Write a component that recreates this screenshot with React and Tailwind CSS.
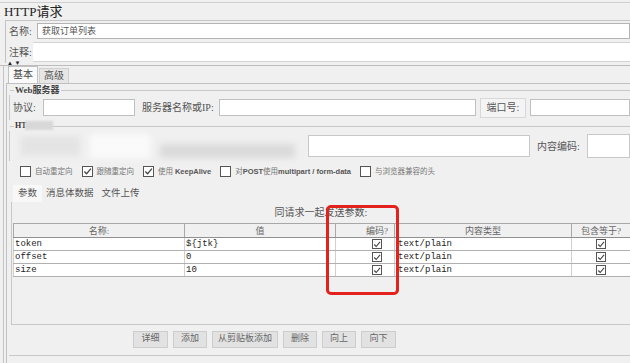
const serif = "font-['Liberation_Serif','Noto_Sans_CJK_SC',serif]";
const mono = "font-['Liberation_Mono','Noto_Sans_CJK_SC',monospace]";
const sans = "font-['Liberation_Sans','Noto_Sans_CJK_SC',sans-serif]";

const Check = ({ checked, size = "w-[11px] h-[11px]" }) => (
  <span className={`${size} inline-flex items-center justify-center border border-[#555] bg-white shrink-0`}>
    {checked && (
      <svg viewBox="0 0 10 10" className="w-[9px] h-[9px]">
        <path d="M1.5 5 L4 7.5 L8.8 1.8" fill="none" stroke="#444" strokeWidth="1.4" />
      </svg>
    )}
  </span>
);

const Option = ({ checked, children }) => (
  <div className="flex items-center gap-[4px]">
    <Check checked={checked} />
    <span className="text-[7.5px] text-[#777] leading-none whitespace-nowrap">{children}</span>
  </div>
);

const rows = [
  ["token", "${jtk}"],
  ["offset", "0"],
  ["size", "10"],
];

export default function App() {
  return (
    <div className={`relative w-[630px] h-[363px] overflow-hidden bg-[#f0f0f0] text-[#333] ${serif}`}>
      {/* 标题 */}
      <div className="mt-[2px] border-t border-[#cfcfcf] h-[18px] pl-[4px] text-[13px] leading-[18px] text-[#222]">
        HTTP请求
      </div>

      {/* 名称 / 注释 */}
      <div className="ml-[5px] border-l border-t border-[#c4c4c4]">
        <div className="h-[20px] flex items-center">
          <span className="w-[30px] pl-[3px] text-[10px] text-[#555]">名称:</span>
          <div className="flex-1 h-[16px] ml-[1px] bg-white border border-[#b4b4b4] text-[9px] leading-[14px] pl-[4px] text-[#555]">
            获取订单列表
          </div>
        </div>
        <div className="h-[22px] flex items-center">
          <span className="w-[27px] pl-[3px] text-[10px] text-[#555]">注释:</span>
          <div className="flex-1 h-[20px] bg-white border-y border-[#d4d4d4]" />
        </div>
      </div>
      <div className="h-[3px] border-b border-[#bdbdbd] relative">
        <span className="absolute left-[7px] top-[-3px] text-[6px] leading-none text-[#222]">▲ ▼</span>
      </div>

      {/* 基本 / 高级 */}
      <div className="ml-[3px] border-l border-[#c4c4c4]">
        <div className="h-[17px] flex items-end pl-[4px] gap-[1px]">
          <div className="h-[17px] px-[4px] bg-[#fafafa] border border-b-0 border-[#c0c0c0] text-[10px] leading-[16px] text-[#444]">基本</div>
          <div className="h-[15px] px-[4px] bg-[#e6e6e6] border border-b-0 border-[#cfcfcf] text-[10px] leading-[14px] text-[#555]">高级</div>
        </div>
        <div className="ml-[2px] border-l border-t border-[#c0c0c0] pl-[2px] h-[290px]">
          {/* Web服务器 */}
          <div className="mt-[1px] h-[10px] relative">
            <div className="absolute left-[1px] right-0 top-[5px] border-t border-[#c8c8c8]" />
            <span className="absolute left-[5px] top-0 px-[1px] bg-[#f0f0f0] text-[9px] leading-[10px] font-bold text-[#444]">Web服务器</span>
          </div>
          <div className="border-l border-[#c8c8c8] h-[25px] flex items-center text-[10px] text-[#555]">
            <span className="w-[33px] pl-[3px]">协议:</span>
            <div className="w-[92px] h-[17px] bg-white border border-[#c0c0c0]" />
            <span className="w-[84px] pl-[7px] whitespace-nowrap">服务器名称或IP:</span>
            <div className="w-[257px] h-[17px] bg-white border border-[#c0c0c0]" />
            <span className="w-[46px] h-[20px] ml-[4px] flex items-center justify-center bg-[#f4f4f4] border border-[#d8d8d8] whitespace-nowrap">端口号:</span>
            <div className="flex-1 h-[17px] ml-[4px] bg-white border border-[#c0c0c0]" />
          </div>

          {/* HTTP请求 (模糊) */}
          <div className="h-[10px] mt-[1px] relative">
            <div className="absolute left-[1px] right-0 top-[5px] border-t border-[#c8c8c8]" />
            <span className="absolute left-[5px] top-0 px-[1px] bg-[#f0f0f0] text-[8px] leading-[10px] font-bold text-[#333]">HT</span>
            <span className="absolute left-[16px] top-0 w-[28px] h-[9px] bg-[#d8d8d8] blur-[1px]" />
          </div>
          <div className="border-l border-[#c8c8c8] h-[30px] flex items-center">
            <div className="w-[298px] h-[28px] relative blur-[3px]">
              <div className="absolute left-[10px] top-[4px] w-[60px] h-[20px] bg-[#e4e4e4]" />
              <div className="absolute left-[80px] top-[2px] w-[60px] h-[24px] bg-[#fafafa]" />
              <div className="absolute left-[150px] top-[12px] w-[135px] h-[14px] bg-[#dadada]" />
            </div>
            <div className="w-[222px] h-[22px] bg-white border border-[#c8c8c8]" />
            <span className="ml-[7px] w-[50px] text-[10px] text-[#555] whitespace-nowrap">内容编码:</span>
            <div className="flex-1 h-[24px] bg-white border border-[#c8c8c8]" />
          </div>

          {/* 选项 */}
          <div className="h-[21px] flex items-center gap-[9px] pl-[11px]">
            <Option>自动重定向</Option>
            <Option checked>跟随重定向</Option>
            <Option checked>
              使用 <span className={`${sans} font-bold text-[#555]`}>KeepAlive</span>
            </Option>
            <Option>
              对<span className={`${sans} font-bold text-[#555]`}>POST</span>使用
              <span className={`${sans} font-bold text-[#555]`}>multipart / form-data</span>
            </Option>
            <Option>与浏览器兼容的头</Option>
          </div>

          {/* 参数 tabs */}
          <div className="h-[17px] mt-[3px] flex items-end pl-[4px] text-[9.5px] text-[#555]">
            <div className="h-[17px] px-[5px] bg-[#f8f8f8] leading-[17px]">参数</div>
            <div className="h-[17px] px-[4px] leading-[17px]">消息体数据</div>
            <div className="h-[17px] px-[4px] leading-[17px]">文件上传</div>
          </div>
          <div className="ml-[2px] border-l border-[#c8c8c8] h-[123px] flex flex-col border-b">
            <div className="h-[20px] text-center text-[10px] leading-[22px] text-[#555]">同请求一起发送参数:</div>
            <div className="ml-[1px] mt-[1px] border-t border-[#a8a8a8]">
              <div className="flex h-[14px] bg-[#f0f0f0] border-b border-[#909090] text-[9px] leading-[14px] text-[#666] text-center">
                <div className="w-[172px] border-l border-r border-[#a8a8a8]">名称:</div>
                <div className="w-[151px] border-r border-[#a8a8a8]">值</div>
                <div className="w-[59px] border-r border-[#a8a8a8] text-right pr-[6px]">编码?</div>
                <div className="w-[177px] border-r border-[#a8a8a8]">内容类型</div>
                <div className="flex-1">包含等于?</div>
              </div>
              {rows.map(([name, value]) => (
                <div key={name} className={`flex h-[13px] bg-white border-b border-[#b0b0b0] text-[9px] leading-[12px] text-[#222] ${mono}`}>
                  <div className="w-[172px] pl-[1px] border-l border-r border-[#d0d0d0]">{name}</div>
                  <div className="w-[151px] pl-[1px] border-r border-[#d0d0d0]">{value}</div>
                  <div className="w-[59px] border-r border-[#d0d0d0] flex items-center justify-end pr-[12px]">
                    <Check checked size="w-[10px] h-[10px]" />
                  </div>
                  <div className="w-[177px] pl-[3px] border-r border-[#d0d0d0]">text/plain</div>
                  <div className="flex-1 flex items-center justify-center">
                    <Check checked size="w-[10px] h-[10px]" />
                  </div>
                </div>
              ))}
            </div>
          </div>

          {/* 按钮 */}
          <div className="h-[28px] flex items-center pl-[124px] gap-[5px] text-[9px] text-[#666]">
            {[["详细", "w-[35px]"], ["添加", "w-[34px]"], ["从剪贴板添加", "w-[66px]"], ["删除", "w-[34px]"], ["向上", "w-[34px]"], ["向下", "w-[35px]"]].map(([t, w]) => (
              <div key={t} className={`${w} h-[17px] flex items-center justify-center bg-[#e2e2e2] border border-[#cdcdcd]`}>{t}</div>
            ))}
          </div>
          <div className="border-t border-[#c8c8c8] mt-[2px]" />
        </div>
      </div>

      {/* 红框标注 */}
      <div className="absolute left-[326px] top-[205px] w-[73px] h-[90px] border-[3px] border-[#e3221d] rounded-[5px]" />
    </div>
  );
}
